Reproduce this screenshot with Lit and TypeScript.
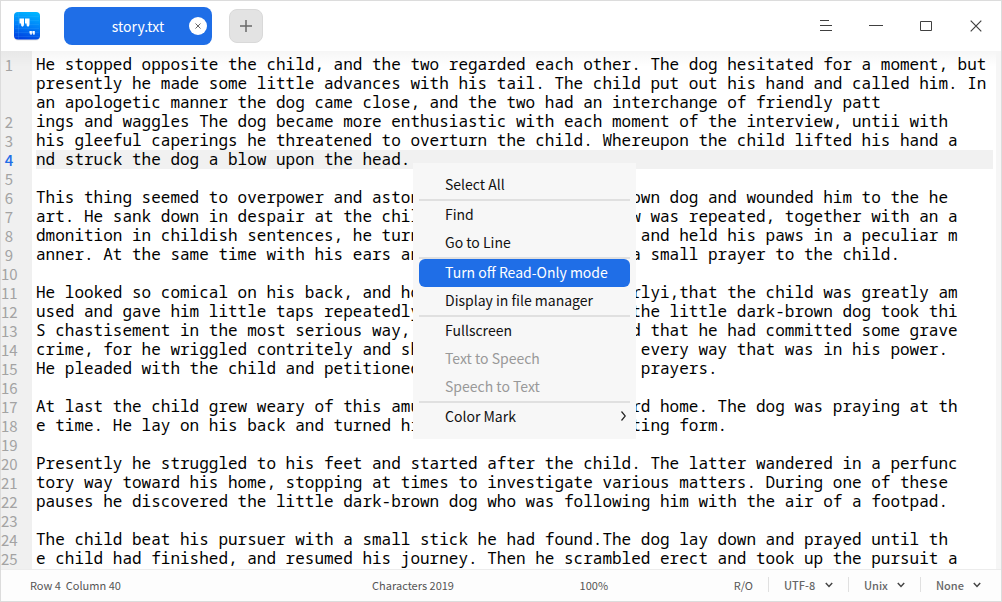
import { LitElement, html, css, nothing } from "lit";
import { customElement, property, state } from "lit/decorators.js";
import { classMap } from "lit/directives/class-map.js";

interface Row {
  n?: number;
  text: string;
}

const FIRST_LINE = [
  "He stopped opposite the child, and the two regarded each other. The dog hesitated for a moment, but",
  "presently he made some little advances with his tail. The child put out his hand and called him. In",
  "an apologetic manner the dog came close, and the two had an interchange of friendly patt",
];

const LINES = [
  "ings and waggles The dog became more enthusiastic with each moment of the interview, untii with",
  "his gleeful caperings he threatened to overturn the child. Whereupon the child lifted his hand a",
  "nd struck the dog a blow upon the head.",
  "",
  "This thing seemed to overpower and astonish the little dark-brown dog and wounded him to the he",
  "art. He sank down in despair at the child's feet. When the blow was repeated, together with an a",
  "dmonition in childish sentences, he turned over upon his back, and held his paws in a peculiar m",
  "anner. At the same time with his ears and his eyes he offered a small prayer to the child.",
  "",
  "He looked so comical on his back, and holding his paws peculiarlyi,that the child was greatly am",
  "used and gave him little taps repeatedly, to keep him so. But the little dark-brown dog took thi",
  "S chastisement in the most serious way, and no doubt considered that he had committed some grave",
  "crime, for he wriggled contritely and showed his repentance in every way that was in his power.",
  "He pleaded with the child and petitioned him, and offered more prayers.",
  "",
  "At last the child grew weary of this amusement and turned toward home. The dog was praying at th",
  "e time. He lay on his back and turned his eyes upon the retreating form.",
  "",
  "Presently he struggled to his feet and started after the child. The latter wandered in a perfunc",
  "tory way toward his home, stopping at times to investigate various matters. During one of these",
  "pauses he discovered the little dark-brown dog who was following him with the air of a footpad.",
  "",
  "The child beat his pursuer with a small stick he had found.The dog lay down and prayed until th",
  "e child had finished, and resumed his journey. Then he scrambled erect and took up the pursuit a",
];

const ROWS: Row[] = [
  ...FIRST_LINE.map((text, i) => ({ n: i === 0 ? 1 : undefined, text })),
  ...LINES.map((text, i) => ({ n: i + 2, text })),
];

@customElement("title-bar")
class TitleBar extends LitElement {
  static styles = css`
    :host {
      display: flex;
      align-items: center;
      height: 50px;
      flex: none;
      padding-left: 13px;
      background: #fff;
    }
    button {
      font: inherit;
      border: 0;
      padding: 0;
      margin: 0;
      background: none;
      display: flex;
      align-items: center;
      justify-content: center;
    }
    svg {
      display: block;
    }
    .tab {
      position: relative;
      display: flex;
      align-items: center;
      justify-content: center;
      width: 148px;
      height: 38px;
      margin-left: 24px;
      border-radius: 8px;
      background: #1f6ee7;
      color: #fff;
      font-size: 14px;
    }
    .close {
      position: absolute;
      right: 5px;
      top: 10px;
      width: 18px;
      height: 18px;
      border-radius: 50%;
      background: #fff;
    }
    .add {
      width: 34px;
      height: 34px;
      margin-left: 17px;
      box-sizing: border-box;
      border: 1px solid #d9d9d9;
      border-radius: 8px;
      background: #e3e3e3;
    }
    .controls {
      display: flex;
      margin-left: auto;
    }
    .controls button {
      width: 50px;
      height: 50px;
    }
  `;

  render() {
    return html`
      <svg width="26" height="30" viewBox="0 0 26 30" aria-hidden="true">
        <defs>
          <linearGradient id="g" x1="0.6" y1="0" x2="0.4" y2="1">
            <stop offset="0" stop-color="#00b4ff" />
            <stop offset="0.5" stop-color="#0080f8" />
            <stop offset="1" stop-color="#0040e0" />
          </linearGradient>
        </defs>
        <rect x="0" y="1.5" width="26" height="28" rx="4" fill="#000" opacity="0.12" />
        <rect x="0" y="1" width="26" height="27.5" rx="4" fill="url(#g)" />
        <path
          d="M1 5.5h24M1 9.5h24M1 13.5h24M1 17.5h24M1 21.5h24M1 25.5h24M4.5 1v27"
          stroke="#5fc4ff"
          stroke-opacity="0.15"
          fill="none"
        />
        <path
          d="M5.500 7.500h4.500v5.500q0 2.200-1.300 2.700-2-.5-1.700-3.200h-1.500zM11 7.500h4.500v5.500q0 2.200-1.300 2.700-2-.5-1.700-3.200H11z"
          fill="#fff"
        />
        <path
          d="M15.500 20h2.400v2.500q0 1.200-.9 1.500-.9-.4-.7-1.500h-.8zM18.400 20h2.400v2.500q0 1.200-.9 1.500-.9-.4-.7-1.500h-.8z"
          fill="#fff"
        />
      </svg>
      <div class="tab">
        <span>story.txt</span>
        <button class="close" aria-label="Close tab">
          <svg width="6" height="6" viewBox="0 0 6 6">
            <path d="M.5.5l5 5M5.500.5l-5 5" stroke="#666" fill="none" />
          </svg>
        </button>
      </div>
      <button class="add" aria-label="New tab">
        <svg width="12" height="12" viewBox="0 0 12 12">
          <path d="M6 0v12M0 6h12" stroke="#6a6a6a" stroke-width="1.500" fill="none" />
        </svg>
      </button>
      <div class="controls">
        <button aria-label="Menu">
          <svg width="12" height="12" viewBox="0 0 12 12">
            <path d="M0 .5h9M0 5.500h12M0 10.500h12" stroke="#404040" fill="none" />
          </svg>
        </button>
        <button aria-label="Minimize">
          <svg width="14" height="12" viewBox="0 0 14 12">
            <path d="M0 5.500h14" stroke="#404040" fill="none" />
          </svg>
        </button>
        <button aria-label="Maximize">
          <svg width="12" height="10" viewBox="0 0 12 10">
            <path d="M.5.5h11v9H.5z" stroke="#404040" fill="none" />
          </svg>
        </button>
        <button aria-label="Close">
          <svg width="12" height="12" viewBox="0 0 12 12">
            <path d="M.7.7l10.600 10.600M11.300.7L.7 11.300" stroke="#404040" stroke-width="1.200" fill="none" />
          </svg>
        </button>
      </div>
    `;
  }
}

@customElement("text-editor")
class TextEditor extends LitElement {
  @property({ type: Number }) current = 4;

  static styles = css`
    :host {
      display: flex;
      flex-direction: column;
      position: relative;
      flex: 1;
      min-height: 0;
      overflow: hidden;
      background: linear-gradient(to right, #f0f0f0 31px, #fff 31px);
    }
    :host::before {
      content: "";
      position: absolute;
      inset: 0 0 auto 0;
      height: 16px;
      background: linear-gradient(rgba(0, 0, 0, 0.035), rgba(0, 0, 0, 0));
    }
    .page {
      flex: 1;
      padding: 4px 3px 0 0;
      border-right: 5px solid #f6f6f6;
      position: relative;
    }
    .row {
      display: grid;
      grid-template-columns: 16px 1fr;
      column-gap: 19px;
      height: 19px;
      line-height: 19px;
    }
    .number {
      text-align: center;
      color: #a3a3a3;
      font-size: 15px;
    }
    .text {
      font-family: "Noto Sans Mono", "DejaVu Sans Mono", monospace;
      font-size: 16px;
      white-space: pre;
      color: #000;
    }
    .current .number {
      color: #1f6ee7;
      font-weight: 500;
    }
    .current .text {
      background: #f1f1f1;
    }
  `;

  render() {
    return html`<div class="page">
      ${ROWS.map(
        (r) => html`<div class=${classMap({ row: true, current: r.n === this.current })}>
          <span class="number">${r.n ?? nothing}</span><span class="text">${r.text}</span>
        </div>`
      )}
    </div>`;
  }
}

interface Item {
  label: string;
  disabled?: boolean;
  submenu?: boolean;
}

const GROUPS: Item[][] = [
  [{ label: "Select All" }],
  [{ label: "Find" }, { label: "Go to Line" }],
  [{ label: "Turn off Read-Only mode" }, { label: "Display in file manager" }],
  [
    { label: "Fullscreen" },
    { label: "Text to Speech", disabled: true },
    { label: "Speech to Text", disabled: true },
  ],
  [{ label: "Color Mark", submenu: true }],
];

@customElement("context-menu")
class ContextMenu extends LitElement {
  @state() active = "Turn off Read-Only mode";

  static styles = css`
    :host {
      display: block;
      box-sizing: border-box;
      width: 223px;
      padding: 8px 6px;
      background: #f7f7f7;
    }
    .group + .group {
      border-top: 2px solid #e0e0e0;
    }
    .item {
      display: flex;
      align-items: center;
      justify-content: space-between;
      width: 100%;
      height: 28px;
      padding: 0 4px 2px 26px;
      border: 0;
      border-radius: 6px;
      background: none;
      color: #111;
      font: inherit;
      font-size: 14px;
      line-height: 20px;
      text-align: left;
    }
    .item:disabled {
      color: #999;
    }
    .active {
      background: #1f6ee7;
      color: #fff;
    }
  `;

  render() {
    return html`<div role="menu">
      ${GROUPS.map(
        (g) => html`<div class="group" role="group">
          ${g.map(
            (i) => html`<button
              role="menuitem"
              class=${classMap({ item: true, active: i.label === this.active })}
              ?disabled=${i.disabled}
              @mouseenter=${() => (this.active = i.label)}
            >
              <span>${i.label}</span>
              ${i.submenu
                ? html`<svg width="5" height="10" viewBox="0 0 5 10">
                    <path d="M.5.5L4.300 5 .5 9.500" stroke="#222" stroke-width="1.200" fill="none" />
                  </svg>`
                : nothing}
            </button>`
          )}
        </div>`
      )}
    </div>`;
  }
}

const SELECTS = [
  { label: "Encoding", value: "UTF-8" },
  { label: "Line endings", value: "Unix" },
  { label: "Syntax", value: "None" },
];

@customElement("status-bar")
class StatusBar extends LitElement {
  static styles = css`
    :host {
      display: flex;
      align-items: center;
      flex: none;
      box-sizing: border-box;
      height: 32px;
      padding: 0 20px 2px 29px;
      border-top: 1px solid #ececec;
      background: #fdfdfd;
      color: #555;
      font-size: 11px;
      line-height: 16px;
      white-space: pre;
    }
    .position {
      flex: 2 0 auto;
    }
    .count {
      flex: 1 0 auto;
    }
    .field {
      display: flex;
      align-items: center;
      height: 15px;
      margin-left: 15px;
      padding-left: 15px;
      border-left: 1px solid #e0e0e0;
    }
    .field select {
      appearance: none;
      border: 0;
      padding: 0 9px 0 0;
      margin: 0;
      background: none;
      color: #666;
      font: inherit;
      font-weight: 500;
    }
    .field svg {
      display: block;
    }
  `;

  render() {
    return html`
      <span class="position">Row 4  Column 40</span>
      <span class="count">Characters 2019</span>
      <span class="count">100%</span>
      <span>R/O</span>
      ${SELECTS.map(
        (s) => html`<label class="field"
          ><select aria-label=${s.label}><option>${s.value}</option></select
          ><svg width="8" height="6" viewBox="0 0 8 6">
            <path d="M.8 1L4 4.400 7.200 1" stroke="#444" stroke-width="1.500" fill="none" /></svg
        ></label>`
      )}
    `;
  }
}

@customElement("app-root")
class AppRoot extends LitElement {
  static styles = css`
    :host {
      display: flex;
      flex-direction: column;
      position: relative;
      box-sizing: border-box;
      height: 100vh;
      border: 1px solid #dcdcdc;
      background: #fff;
      font-family: "Noto Sans CJK SC", sans-serif;
    }
    .menu {
      position: absolute;
      left: 412px;
      top: 162px;
    }
  `;

  render() {
    return html`
      <title-bar></title-bar>
      <text-editor .current=${4}></text-editor>
      <status-bar></status-bar>
      <context-menu class="menu"></context-menu>
    `;
  }
}
